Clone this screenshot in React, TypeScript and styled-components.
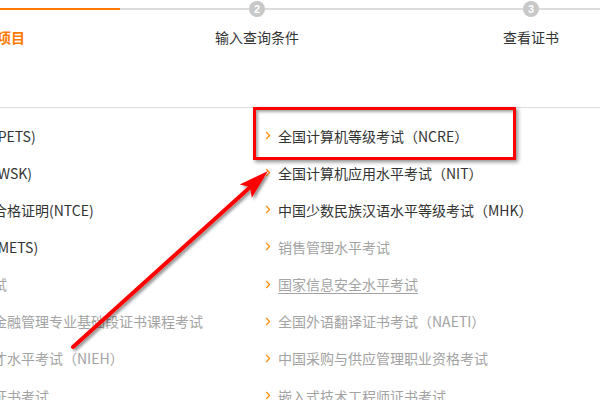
import React from "react";
import styled, { createGlobalStyle } from "styled-components";

const GlobalStyle = createGlobalStyle`
  html, body { margin: 0; padding: 0; background: #fff; }
  body { font-family: "Noto Sans CJK SC", "Noto Sans", sans-serif; overflow: hidden; }
`;

const ORANGE = "#ff7a00";
const LINE = "#dcdcdc";

const Page = styled.div`
  position: relative;
  width: 600px;
  height: 400px;
  overflow: hidden;
  background: #fff;
`;

const Inner = styled.div`
  margin-left: -154px;
  width: 822px;
`;

const StepsBar = styled.div`
  display: grid;
  grid-template-columns: repeat(3, 274px);
  height: 107px;
  border-bottom: 1px solid ${LINE};
  width: 1000px;
`;

const Step = styled.div`
  display: flex;
  flex-direction: column;
  align-items: center;
`;

const Track = styled.div`
  display: flex;
  align-items: center;
  width: 100%;
  height: 18px;
`;

const TrackLine = styled.div<{ $active?: boolean }>`
  flex: 1;
  height: 2px;
  background: ${(p) => (p.$active ? ORANGE : LINE)};
`;

const Circle = styled.div<{ $active?: boolean }>`
  width: 16px;
  height: 16px;
  border-radius: 50%;
  background: ${(p) => (p.$active ? ORANGE : "#c8c8c8")};
  color: #fff;
  font-family: "Liberation Sans", Arial, sans-serif;
  font-weight: bold;
  font-size: 11px;
  line-height: 16px;
  text-align: center;
  flex: none;
`;

const StepLabel = styled.div<{ $active?: boolean }>`
  margin-top: 9px;
  font-size: 14px;
  line-height: 20px;
  color: ${(p) => (p.$active ? ORANGE : "#333")};
  font-weight: ${(p) => (p.$active ? "bold" : "normal")};
`;

const List = styled.div`
  display: grid;
  grid-template-columns: 397px 397px;
  padding: 9px 0 0 22px;
`;

const Column = styled.ul`
  list-style: none;
  margin: 0;
  padding: 0;
`;

const Item = styled.li`
  display: flex;
  align-items: center;
  height: 37.15px;
  white-space: nowrap;
`;

const Chevron = styled.svg`
  width: 13px;
  height: 9px;
  flex: none;
`;

const ItemText = styled.span<{ $dim?: boolean; $underline?: boolean }>`
  font-size: 14px;
  line-height: 20px;
  color: ${(p) => (p.$dim ? "#a3a3a3" : "#333")};
  text-decoration: ${(p) => (p.$underline ? "underline" : "none")};
  text-underline-offset: 3px;
`;

const HighlightBox = styled.div`
  position: absolute;
  left: 253px;
  top: 107px;
  width: 257px;
  height: 47px;
  border: 3.5px solid #f00;
  box-shadow: 2px 2px 4px rgba(0, 0, 0, 0.45), inset 2px 2px 3px rgba(0, 0, 0, 0.35);
  pointer-events: none;
`;

const ArrowLayer = styled.svg`
  position: absolute;
  left: 0;
  top: 0;
  width: 600px;
  height: 400px;
  pointer-events: none;
`;

type Entry = { text: string; dim?: boolean; underline?: boolean };

const leftItems: Entry[] = [
  { text: "全国英语等级考试(PETS)" },
  { text: "全国外语水平考试(WSK)" },
  { text: "全国教师资格考试合格证明(NTCE)" },
  { text: "医护英语水平考试(METS)" },
  { text: "公共营养师资格考试", dim: true },
  { text: "全国高等教育自考金融管理专业基础段证书课程考试", dim: true },
  { text: "全国信息化专业人才水平考试（NIEH）", dim: true },
  { text: "全国信息技术应用证书考试", dim: true },
];

const rightItems: Entry[] = [
  { text: "全国计算机等级考试（NCRE）" },
  { text: "全国计算机应用水平考试（NIT）" },
  { text: "中国少数民族汉语水平等级考试（MHK）" },
  { text: "销售管理水平考试", dim: true },
  { text: "国家信息安全水平考试", dim: true, underline: true },
  { text: "全国外语翻译证书考试（NAETI）", dim: true },
  { text: "中国采购与供应管理职业资格考试", dim: true },
  { text: "嵌入式技术工程师证书考试", dim: true },
];

const steps = [
  { n: 1, label: "选择考试项目", active: true },
  { n: 2, label: "输入查询条件", active: false },
  { n: 3, label: "查看证书", active: false },
];

function ListColumn({ items }: { items: Entry[] }) {
  return (
    <Column>
      {items.map((it) => (
        <Item key={it.text}>
          <Chevron viewBox="0 0 13 9">
            <path d="M1.2 1 L4.6 4.5 L1.2 8" fill="none" stroke="#ff8c00" strokeWidth="1.2" />
          </Chevron>
          <ItemText $dim={it.dim} $underline={it.underline}>
            {it.text}
          </ItemText>
        </Item>
      ))}
    </Column>
  );
}

// arrow from tail to tip
const tail = { x: 73, y: 347 };
const tip = { x: 268, y: 171 };
const dx = tip.x - tail.x;
const dy = tip.y - tail.y;
const len = Math.hypot(dx, dy);
const ux = dx / len;
const uy = dy / len;
const headLen = 30;
const headHalf = 9;
const baseX = tip.x - ux * headLen;
const baseY = tip.y - uy * headLen;
const px = -uy;
const py = ux;
const head = `${tip.x},${tip.y} ${baseX + px * headHalf},${baseY + py * headHalf} ${baseX + ux * 6},${baseY + uy * 6} ${baseX - px * headHalf},${baseY - py * headHalf}`;

export default function App() {
  return (
    <>
      <GlobalStyle />
      <Page>
        <Inner>
          <StepsBar>
            {steps.map((s) => (
              <Step key={s.n}>
                <Track>
                  <TrackLine $active={s.active} />
                  <Circle $active={s.active}>{s.n}</Circle>
                  <TrackLine $active={s.active} />
                </Track>
                <StepLabel $active={s.active}>{s.label}</StepLabel>
              </Step>
            ))}
          </StepsBar>
          <List>
            <ListColumn items={leftItems} />
            <ListColumn items={rightItems} />
          </List>
        </Inner>
        <HighlightBox />
        <ArrowLayer viewBox="0 0 600 400">
          <defs>
            <filter id="sh" x="-20%" y="-20%" width="140%" height="140%">
              <feDropShadow dx="2" dy="2" stdDeviation="1.6" floodColor="#000" floodOpacity="0.45" />
            </filter>
          </defs>
          <g filter="url(#sh)">
            <line
              x1={tail.x}
              y1={tail.y}
              x2={baseX + ux * 8}
              y2={baseY + uy * 8}
              stroke="#f00"
              strokeWidth="4"
              strokeLinecap="round"
            />
            <polygon points={head} fill="#f00" />
          </g>
        </ArrowLayer>
      </Page>
    </>
  );
}
